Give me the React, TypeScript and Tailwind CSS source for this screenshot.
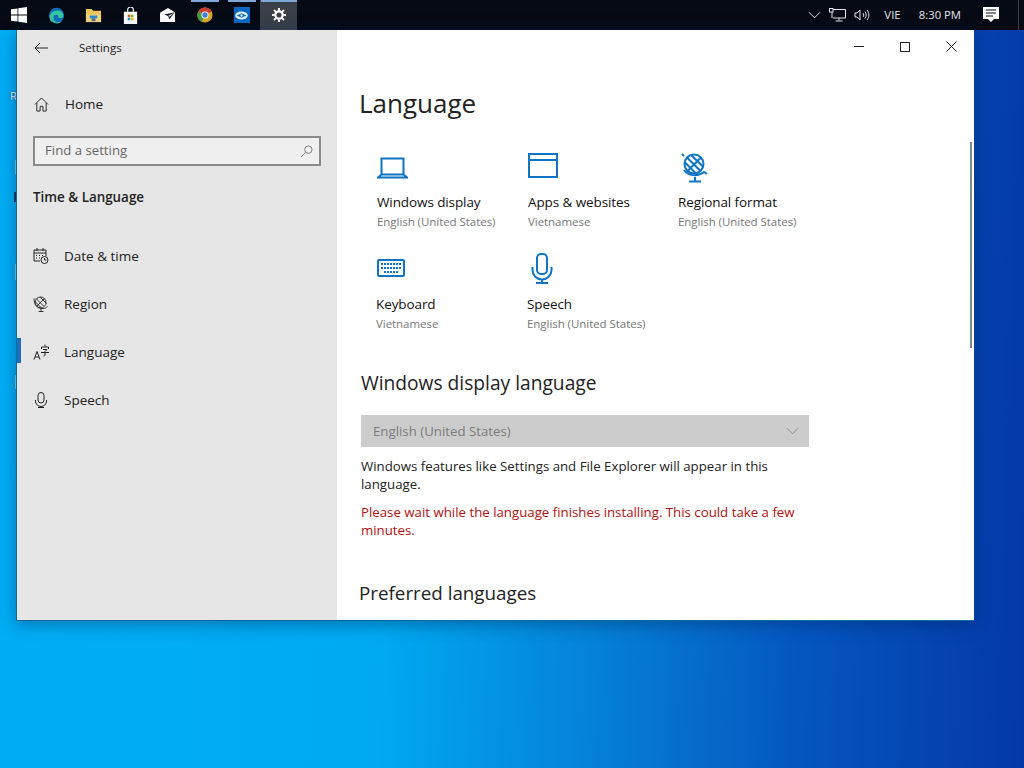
const font = "font-['Open_Sans','Noto_Sans',sans-serif]";

function Blue({ children, box = "0 0 36 36", className = "" }: { children: React.ReactNode; box?: string; className?: string }) {
  return (
    <svg viewBox={box} fill="none" stroke="#0f74c4" strokeWidth="2" className={className}>
      {children}
    </svg>
  );
}

function Tile({ icon, title, sub, className = "", iconBox = "h-[30px]" }: { icon: React.ReactNode; title: string; sub: string; className?: string; iconBox?: string }) {
  return (
    <div className={`flex flex-col ${className}`}>
      <div className={iconBox}>{icon}</div>
      <div className="mt-[9px] text-[13.5px] leading-[20px] tracking-[-0.1px] text-[#111]">{title}</div>
      <div className="mt-[1px] text-[11.5px] leading-[18px] tracking-[-0.05px] text-[#777]">{sub}</div>
    </div>
  );
}

function NavItem({ icon, label, active }: { icon: React.ReactNode; label: string; active?: boolean }) {
  return (
    <div className="relative flex h-[48px] items-center pl-[16px]">
      {active && <div className="absolute left-0 top-[10px] h-[25px] w-[4px] bg-[#1a6fc0]" />}
      <div className="flex w-[31px] items-center">{icon}</div>
      <span className="text-[13.5px] text-[#222]">{label}</span>
    </div>
  );
}

function Slot({ children, active, running }: { children: React.ReactNode; active?: boolean; running?: boolean }) {
  return (
    <div className={`relative flex h-[30px] w-[37px] items-center justify-center ${active ? "bg-[#3a4048]" : ""}`}>
      {running && <div className={`absolute top-0 h-[2px] bg-[#7fa8d8] ${active ? "left-[1px] right-0" : "left-[5px] right-[4px]"}`} />}
      {children}
    </div>
  );
}

const nav = "#222";

export default function App() {
  return (
    <div className={`relative h-[768px] w-[1024px] overflow-hidden bg-[linear-gradient(92deg,#00aef6_0%,#00aaf2_38%,#0583d8_58%,#0557c0_78%,#0438a8_100%)] ${font}`}>
      {/* taskbar */}
      <div className="absolute left-0 right-0 top-0 flex h-[30px] items-center bg-[#050a14] text-white">
        <div className="flex w-[38px] justify-center">
          <svg viewBox="0 0 16 16" className="h-[16px] w-[16px]" fill="#fff">
            <path d="M0 2.3 6.5 1.4v6.2H0zM7.3 1.3 16 0v7.6H7.3zM0 8.4h6.5v6.2L0 13.7zM7.3 8.4H16V16l-8.7-1.3z" />
          </svg>
        </div>
        <Slot>
          <svg viewBox="0 0 20 20" className="h-[17px] w-[17px]">
            <circle cx="10" cy="10" r="9" fill="#0c6fb8" />
            <path d="M2 12C2 5 13 1 17 7c2 3 1 6-2 6-3 0-3-1-3-3-3-2-7 0-5 5 1 3 6 4 10 1-3 4-8 4-11 2-3-1-4-3-4-6z" fill="#39c6a3" />
          </svg>
        </Slot>
        <Slot>
          <svg viewBox="0 0 18 18" className="h-[17px] w-[17px]">
            <path d="M1 2h6l1.500 2H17v12H1z" fill="#eec55a" />
            <rect x="1" y="8" width="16" height="8" fill="#f3d77f" />
            <rect x="5" y="9" width="8" height="3" fill="#2f8dd0" />
            <rect x="7" y="12" width="4" height="3" fill="#5a6a80" />
          </svg>
        </Slot>
        <Slot>
          <svg viewBox="0 0 18 18" className="h-[17px] w-[17px]">
            <path d="M6 5V3a3 3 0 0 1 6 0v2" fill="none" stroke="#fff" strokeWidth="1.200" />
            <rect x="2" y="5" width="14" height="13" fill="#fff" />
            <rect x="6" y="8" width="2.800" height="2.800" fill="#e8562a" />
            <rect x="9.300" y="8" width="2.800" height="2.800" fill="#7ab92b" />
            <rect x="6" y="11.300" width="2.800" height="2.800" fill="#1ba1e2" />
            <rect x="9.300" y="11.300" width="2.800" height="2.800" fill="#f6b90f" />
          </svg>
        </Slot>
        <Slot>
          <svg viewBox="0 0 18 15" className="h-[14px] w-[17px]">
            <path d="M1 5 9.500 0 17 4.500V15H1z" fill="#fff" />
            <path d="M5.500 7 17 4.500 11 12 9.500 8.500z" fill="#10151f" />
            <path d="M9.500 8.500 17 4.500 11 9.500z" fill="#fff" />
          </svg>
        </Slot>
        <Slot running>
          <svg viewBox="0 0 18 18" className="h-[16px] w-[16px]">
            <circle cx="9" cy="9" r="8.500" fill="#d8a92a" />
            <path d="M9 9 1.500 5A8.500 8.500 0 0 1 16.500 5z" fill="#c8402f" />
            <path d="M9 9 5 17A8.500 8.500 0 0 1 1.500 5z" fill="#4a9a40" />
            <circle cx="9" cy="9" r="4" fill="#fff" />
            <circle cx="9" cy="9" r="3" fill="#3f82d8" />
          </svg>
        </Slot>
        <Slot running>
          <div className="flex h-[16px] w-[16px] items-center justify-center bg-[#0a68c2]">
            <svg viewBox="0 0 14 10" className="h-[9px] w-[13px]">
              <ellipse cx="7" cy="5" rx="7" ry="4.500" fill="#e4f2fb" />
              <path d="M1.500 5 7 2.500 12.500 5 7 7.500z" fill="#0a68c2" />
              <circle cx="7" cy="5" r="1.300" fill="#e4f2fb" />
            </svg>
          </div>
        </Slot>
        <Slot active running>
          <svg viewBox="0 0 16 16" className="h-[14px] w-[14px]" fill="none" stroke="#fff" strokeWidth="2.600">
            <circle cx="8" cy="8" r="4.200" />
            <path strokeWidth="2.200" d="M8 0v3M8 13v3M0 8h3M13 8h3M2.300 2.300l2.200 2.200M11.500 11.500l2.200 2.200M2.300 13.700l2.200-2.200M11.500 4.500l2.200-2.200" />
          </svg>
        </Slot>

        <div className="ml-auto flex items-center text-[#e4e6ea]">
          <svg viewBox="0 0 14 8" className="h-[8px] w-[13px]" fill="none" stroke="#e4e6ea" strokeWidth="1">
            <path d="M1 1l6 6 6-6" />
          </svg>
          <svg viewBox="0 0 17 14" className="ml-[8px] h-[14px] w-[17px]" fill="none" stroke="#e4e6ea" strokeWidth="1">
            <path d="M4 1.500h12.500v8.500H4M10 10v2.500M6.500 13h7" />
            <rect x="0.500" y="0.500" width="3.500" height="3.500" />
            <path d="M3 4v6" />
          </svg>
          <svg viewBox="0 0 17 14" className="ml-[8px] h-[14px] w-[17px]" fill="none" stroke="#e4e6ea" strokeWidth="1">
            <path d="M1 5v4h2l3 3V2L3 5zM9 5c1 1 1 3 0 4M11 3.500c1.600 2 1.600 5 0 7M13 2c2.500 3 2.500 7 0 10" />
          </svg>
          <span className="ml-[13px] text-[11.5px]">VIE</span>
          <span className="ml-[18px] text-[11.3px]">8:30 PM</span>
          <svg viewBox="0 0 16 16" className="ml-[22px] h-[16px] w-[16px]" fill="#fff">
            <path d="M0 0h16v12h-5l-3 3-3-3H0z" />
            <path d="M3 3h10M3 6h10M3 9h7" stroke="#050a14" strokeWidth="1" />
          </svg>
          <div className="ml-[19px] mr-[5px] h-[30px] w-px bg-[#3a3f48]" />
        </div>
      </div>

      {/* desktop icons behind the window, only their edges show */}
      <span className="absolute left-[10px] top-[88px] text-[11px] text-white [text-shadow:0_0_2px_#003a70]">R</span>
      <div className="absolute left-[15px] top-[160px] h-[14px] w-[2px] bg-[#7fc8ea]" />
      <div className="absolute left-[14px] top-[192px] h-[10px] w-[3px] bg-[#0b3c66]" />
      <div className="absolute left-[15px] top-[264px] h-[16px] w-[2px] bg-[#7fc8ea]" />
      <div className="absolute left-[15px] top-[375px] h-[14px] w-[2px] bg-[#7fc8ea]" />

      {/* settings window */}
      <div className="absolute left-[16px] top-[30px] flex h-[591px] w-[958px] border-b border-l border-[#0f6a9c] shadow-[0_3px_16px_rgba(0,40,90,0.45)]">
        <div className="w-[320px] shrink-0 bg-[#e6e6e6]">
          <div className="flex h-[35px] items-center pl-[17px]">
            <svg viewBox="0 0 14 12" className="h-[12px] w-[14px]" fill="none" stroke="#222" strokeWidth="1">
              <path d="M14 6H1M6 1 1 6l5 5" />
            </svg>
            <span className="ml-[31px] text-[11.5px] text-[#222]">Settings</span>
          </div>
          <div className="mt-[21px] flex h-[36px] items-center pl-[17px]">
            <svg viewBox="0 0 16 16" className="h-[15px] w-[15px]" fill="none" stroke={nav} strokeWidth="1">
              <path d="M1 8 8 1l7 7M3 6.500V15h3.500v-5h3v5H13V6.500" />
            </svg>
            <span className="ml-[16px] text-[13.5px] text-[#222]">Home</span>
          </div>
          <div className="ml-[16px] mt-[14px] flex h-[30px] w-[288px] items-center justify-between border-2 border-[#8a8a8a] bg-[#f0f0f0] pl-[10px] pr-[6px]">
            <span className="text-[13.2px] text-[#666]">Find a setting</span>
            <svg viewBox="0 0 14 14" className="h-[13px] w-[13px]" fill="none" stroke="#777" strokeWidth="1">
              <circle cx="9" cy="5" r="4" />
              <path d="M6 8 1 13" />
            </svg>
          </div>
          <div className="ml-[16px] mt-[20px] text-[13.4px] font-semibold leading-[22px] text-[#222]">Time & Language</div>
          <div className="mt-[24px] flex flex-col">
            <NavItem
              label="Date & time"
              icon={
                <svg viewBox="0 0 16 16" className="h-[16px] w-[16px]" fill="none" stroke={nav} strokeWidth="1">
                  <path d="M7 13H1V2h12v6M1 5h12M4 0v3M10 0v3M3 7.500h1M6 7.500h1M9 7.500h1M3 10h1M6 10h1" />
                  <circle cx="11.500" cy="12" r="3.500" />
                  <path d="M11.500 10v2h2" />
                </svg>
              }
            />
            <NavItem
              label="Region"
              icon={
                <svg viewBox="0 0 16 16" className="h-[16px] w-[16px]" fill="none" stroke={nav} strokeWidth="0.900">
                  <circle cx="7.500" cy="6.500" r="5.500" />
                  <path d="M3 2.500 10.500 10M11.500 2.500 4 10M1.500 5l6.500 6.500M7 1l6.500 6.500M1 2.500c0 5 3 10 9 10 2 0 3.500-1 4.500-2M8 12.500V16M5.500 15.500h5" />
                </svg>
              }
            />
            <NavItem
              active
              label="Language"
              icon={
                <svg viewBox="0 0 16 16" className="h-[16px] w-[16px]" fill="none" stroke={nav} strokeWidth="1">
                  <path d="M1 15.500 4 7.500l3 8M2 13h4M12 0.500v2M8.500 5V3h7v2M10 5.500h4l-2 2v3.500c0 .7-.6 1-1.500 1M8 8.500h8" />
                </svg>
              }
            />
            <NavItem
              label="Speech"
              icon={
                <svg viewBox="0 0 16 16" className="h-[16px] w-[16px]" fill="none" stroke={nav} strokeWidth="1">
                  <rect x="5" y="0.500" width="6" height="10.500" rx="3" />
                  <path d="M2.500 8v1a5.500 5.500 0 0 0 11 0V8M8 14.500V16M5 15.500h6" />
                </svg>
              }
            />
          </div>
        </div>

        <div className="relative flex-1 overflow-hidden bg-white pl-[22px]">
          <div className="absolute right-0 top-0 flex h-[33px] items-center">
            <div className="flex w-[46px] justify-center">
              <div className="h-px w-[10px] bg-[#222]" />
            </div>
            <div className="flex w-[46px] justify-center">
              <div className="h-[10px] w-[10px] border border-[#222]" />
            </div>
            <div className="flex w-[46px] justify-center">
              <svg viewBox="0 0 11 11" className="h-[11px] w-[11px]" stroke="#222" strokeWidth="1">
                <path d="M0.500 0.500l10 10M10.500 0.500l-10 10" />
              </svg>
            </div>
          </div>
          <div className="absolute right-[2px] top-[112px] h-[206px] w-[2px] bg-[#7c8a80]" />

          <h1 className="mt-[54px] text-[26px] font-normal leading-[38px] text-[#222]">Language</h1>

          <div className="ml-[18px] mt-[31px] grid w-[450px] grid-cols-[151px_150px_149px] gap-y-[22px]">
            <Tile
              title="Windows display"
              sub="English (United States)"
              icon={
                <Blue className="mt-[4px] h-[22px] w-[31px]" box="0 0 31 22">
                  <path d="M4.500 1.500h22v16h-22zM4.500 17.500 1 20.500h29l-3.500-3" />
                </Blue>
              }
            />
            <Tile
              title="Apps & websites"
              sub="Vietnamese"
              icon={
                <Blue className="h-[25px] w-[30px]" box="0 0 30 25">
                  <path d="M1 1h28v23H1zM1 7h28" />
                </Blue>
              }
            />
            <Tile
              title="Regional format"
              sub="English (United States)"
              icon={
                <Blue className="ml-[3px] h-[30px] w-[27px]" box="0 0 27 30">
                  <circle cx="13" cy="11" r="9.500" />
                  <path d="M6 4.500 19.500 18M20 4.500 6.500 18M3.500 9 15 20.500M10 2l12.500 12M1 1l2 2M3 17c4 6 14 7 20 2l3 2M14 24v4M8 28.500h12" />
                </Blue>
              }
            />
            <Tile
              className="-ml-[1px]"
              iconBox="h-[32px] flex items-end"
              title="Keyboard"
              sub="Vietnamese"
              icon={
                <Blue className="mb-[8px] ml-[1px] h-[18px] w-[28px]" box="0 0 28 18">
                  <rect x="1" y="1" width="26" height="16" rx="1" />
                  <path strokeDasharray="2 1" strokeWidth="2.200" d="M4 5h20M4 9h20M7 13h14" />
                </Blue>
              }
            />
            <Tile
              className="-ml-[1px]"
              iconBox="h-[32px]"
              title="Speech"
              sub="English (United States)"
              icon={
                <Blue className="ml-[4px] h-[31px] w-[22px]" box="0 0 22 31">
                  <rect x="6" y="1" width="10" height="20" rx="4" />
                  <path d="M1.500 14v3a9.500 9.500 0 0 0 19 0v-3M11 26v4M5 30h12" />
                </Blue>
              }
            />
          </div>

          <h2 className="ml-[2px] mt-[36px] text-[19.2px] font-normal leading-[28px] text-[#222]">Windows display language</h2>
          <div className="ml-[2px] mt-[18px] flex h-[32px] w-[448px] items-center justify-between bg-[#cccccc] pl-[12px] pr-[10px]">
            <span className="pt-[1px] text-[13.25px] text-[#7c7c7c]">English (United States)</span>
            <svg viewBox="0 0 14 8" className="h-[8px] w-[13px]" fill="none" stroke="#8c8c8c" strokeWidth="1">
              <path d="M1 1l6 6 6-6" />
            </svg>
          </div>
          <p className="ml-[2px] mt-[10px] w-[440px] text-[13.25px] leading-[18px] text-[#222]">
            Windows features like Settings and File Explorer will appear in this language.
          </p>
          <p className="ml-[2px] mt-[10px] w-[440px] text-[13.25px] leading-[18px] text-[#b01010]">
            Please wait while the language finishes installing. This could take a few minutes.
          </p>
          <h2 className="mt-[40px] text-[18.8px] font-normal leading-[28px] text-[#222]">Preferred languages</h2>
        </div>
      </div>
    </div>
  );
}
